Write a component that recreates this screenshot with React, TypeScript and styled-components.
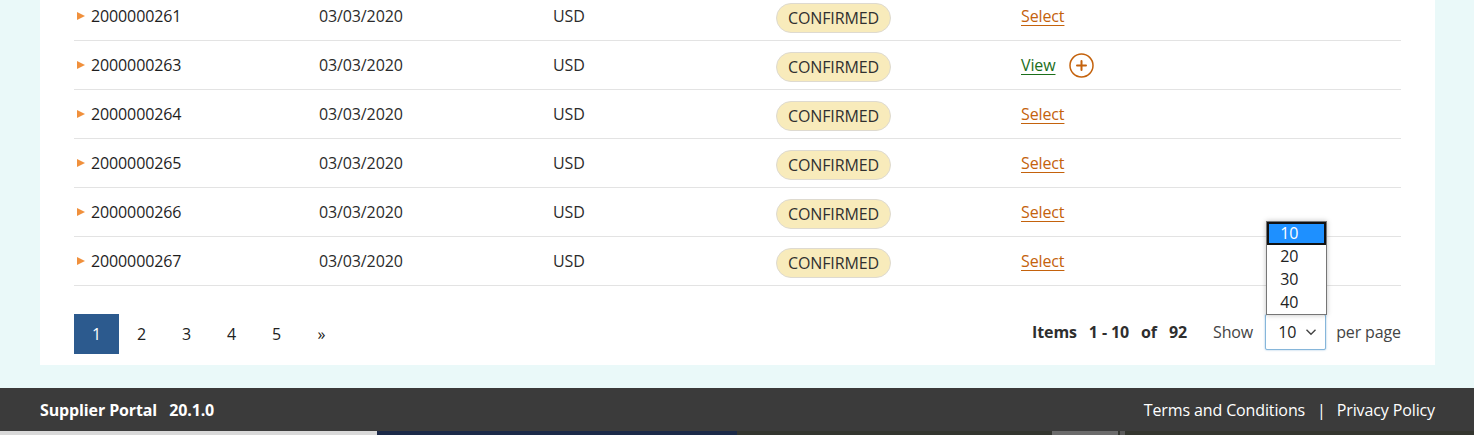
import React from "react";
import styled, { createGlobalStyle } from "styled-components";

const GlobalStyle = createGlobalStyle`
  html, body {
    margin: 0;
    padding: 0;
    background: #eaf9f9;
    font-family: "Open Sans", "Liberation Sans", sans-serif;
    letter-spacing: -0.12px;
    color: #222;
    overflow: hidden;
  }
`;

type Order = {
  id: string;
  date: string;
  currency: string;
  status: string;
  action: "select" | "view";
};

const orders: Order[] = [
  { id: "2000000261", date: "03/03/2020", currency: "USD", status: "CONFIRMED", action: "select" },
  { id: "2000000263", date: "03/03/2020", currency: "USD", status: "CONFIRMED", action: "view" },
  { id: "2000000264", date: "03/03/2020", currency: "USD", status: "CONFIRMED", action: "select" },
  { id: "2000000265", date: "03/03/2020", currency: "USD", status: "CONFIRMED", action: "select" },
  { id: "2000000266", date: "03/03/2020", currency: "USD", status: "CONFIRMED", action: "select" },
  { id: "2000000267", date: "03/03/2020", currency: "USD", status: "CONFIRMED", action: "select" },
];

const pages = ["1", "2", "3", "4", "5", "»"];
const sizes = ["10", "20", "30", "40"];

export default function App() {
  return (
    <>
      <GlobalStyle />
      <Page>
        <Panel>
          {orders.map((order) => (
            <Row key={order.id}>
              <IdCell>
                <Caret />
                {order.id}
              </IdCell>
              <Cell>{order.date}</Cell>
              <Cell>{order.currency}</Cell>
              <Cell>
                <StatusBadge>{order.status}</StatusBadge>
              </Cell>
              <Cell>
                {order.action === "select" ? (
                  <ActionLink href="#">Select</ActionLink>
                ) : (
                  <>
                    <ActionLink href="#" $green>
                      View
                    </ActionLink>
                    <PlusButton aria-label="Add">
                      <svg width="25" height="25" viewBox="0 0 25 25">
                        <circle cx="12.5" cy="12.5" r="11.5" fill="none" stroke="#c4620c" strokeWidth="1.5" />
                        <path d="M12.5 8v9M8 12.5h9" stroke="#c4620c" strokeWidth="2" strokeLinecap="round" />
                      </svg>
                    </PlusButton>
                  </>
                )}
              </Cell>
            </Row>
          ))}
          <Pager>
            <PageList>
              {pages.map((p) => (
                <PageItem key={p} $active={p === "1"}>
                  {p}
                </PageItem>
              ))}
            </PageList>
            <PagerInfo>
              <Summary>
                <span>Items</span>
                <span>1 - 10</span>
                <span>of</span>
                <span>92</span>
              </Summary>
              <Label>Show</Label>
              <SizeSelect>
                <SizeValue>10</SizeValue>
                <svg width="12" height="8" viewBox="0 0 12 8">
                  <path d="M1.5 1.8 6 6.2l4.5-4.4" fill="none" stroke="#444" strokeWidth="1.4" />
                </svg>
                <SizeMenu>
                  {sizes.map((s) => (
                    <SizeOption key={s} $selected={s === "10"}>
                      {s}
                    </SizeOption>
                  ))}
                </SizeMenu>
              </SizeSelect>
              <Label>per page</Label>
            </PagerInfo>
          </Pager>
        </Panel>
      </Page>
      <Footer>
        <Brand>
          Supplier Portal<Version>20.1.0</Version>
        </Brand>
        <FooterLinks>
          <FooterLink href="#">Terms and Conditions</FooterLink>
          <Divider>|</Divider>
          <FooterLink href="#">Privacy Policy</FooterLink>
        </FooterLinks>
      </Footer>
      <BelowStrip>
        <StripBlock $w="377px" $c="#d9d9d9" />
        <StripBlock $w="360px" $c="#1c2a48" />
        <StripBlock $w="315px" $c="#33352f" />
        <StripBlock $w="66px" $c="#6b6b6b" />
        <StripBlock $w="2px" $c="#33352f" />
        <StripBlock $w="5px" $c="#5a5a5a" />
        <StripBlock $w="auto" $c="#34362f" $grow />
      </BelowStrip>
    </>
  );
}

const Page = styled.main`
  padding: 0 39px 23px 40px;
`;

const Panel = styled.section`
  background: #fff;
  margin-top: -8px;
  padding: 0 34px 11px;
`;

const Row = styled.div`
  display: grid;
  grid-template-columns: 245px 234px 223px 245px 1fr;
  height: 48px;
  align-items: center;
  border-bottom: 1px solid #e3e3e3;
  font-size: 16px;
`;

const Cell = styled.div`
  display: flex;
  align-items: center;
  color: #2b2b2b;
`;

const IdCell = styled(Cell)`
  color: #1e1e1e;
`;

const Caret = styled.span`
  width: 0;
  height: 0;
  margin: 0 6px 0 3px;
  border-left: 8px solid #f0903c;
  border-top: 4.5px solid transparent;
  border-bottom: 4.5px solid transparent;
`;

const StatusBadge = styled.span`
  display: inline-flex;
  align-items: center;
  height: 28px;
  margin-top: 4px;
  padding: 0 11px;
  border: 1px solid #dedad0;
  border-radius: 15px;
  background: #f8ebbb;
  color: #303030;
  font-size: 16px;
`;

const ActionLink = styled.a<{ $green?: boolean }>`
  color: ${(p) => (p.$green ? "#1b6e1b" : "#c4620c")};
  text-decoration: underline;
  text-underline-offset: 3px;
  font-size: 16px;
`;

const PlusButton = styled.span`
  display: inline-flex;
  margin-left: 14px;
  margin-top: 1px;
`;

const Pager = styled.div`
  display: flex;
  justify-content: space-between;
  align-items: flex-start;
  padding-top: 28px;
`;

const PageList = styled.div`
  display: flex;
`;

const PageItem = styled.span<{ $active?: boolean }>`
  width: 45px;
  height: 40px;
  display: flex;
  align-items: center;
  justify-content: center;
  font-size: 16px;
  color: ${(p) => (p.$active ? "#fff" : "#222")};
  background: ${(p) => (p.$active ? "#2c5a8e" : "transparent")};
`;

const PagerInfo = styled.div`
  display: flex;
  align-items: center;
  font-size: 16px;
`;

const Summary = styled.div`
  display: flex;
  gap: 12px;
  font-weight: 700;
  color: #2e2e2e;
  margin-right: 26px;
`;

const Label = styled.span`
  color: #444;
`;

const SizeSelect = styled.div`
  position: relative;
  display: flex;
  align-items: center;
  box-sizing: border-box;
  width: 61px;
  height: 36px;
  margin: 0 10px 0 12px;
  padding-left: 12px;
  border: 1px solid #86b6da;
  border-radius: 2px;
  box-shadow: 0 0 2px rgba(70, 140, 200, 0.6);
  background: #fff;
`;

const SizeValue = styled.span`
  color: #222;
  margin-right: 9px;
`;

const SizeMenu = styled.ul`
  position: absolute;
  bottom: 100%;
  left: 0;
  width: 61px;
  box-sizing: border-box;
  margin: 0;
  padding: 0;
  list-style: none;
  background: #fff;
  border: 1px solid #767676;
  box-shadow: 0 0 5px rgba(0, 0, 0, 0.25);
`;

const SizeOption = styled.li<{ $selected?: boolean }>`
  box-sizing: border-box;
  height: 23px;
  line-height: ${(p) => (p.$selected ? "19px" : "23px")};
  padding-left: ${(p) => (p.$selected ? "11px" : "13px")};
  font-size: 16px;
  color: ${(p) => (p.$selected ? "#fff" : "#222")};
  background: ${(p) => (p.$selected ? "#1e90ff" : "#fff")};
  border: ${(p) => (p.$selected ? "2px solid #111" : "none")};
`;

const Footer = styled.footer`
  display: flex;
  justify-content: space-between;
  align-items: center;
  height: 43px;
  padding: 0 39px 0 40px;
  background: #3b3b3b;
  color: #fff;
  font-size: 16px;
`;

const Brand = styled.div`
  font-weight: 700;
`;

const Version = styled.span`
  margin-left: 12px;
`;

const FooterLinks = styled.div`
  display: flex;
  align-items: center;
`;

const FooterLink = styled.a`
  color: #fff;
  text-decoration: none;
`;

const Divider = styled.span`
  margin: 0 11px 0 12px;
`;

const BelowStrip = styled.div`
  display: flex;
  height: 4px;
`;

const StripBlock = styled.div<{ $w: string; $c: string; $grow?: boolean }>`
  width: ${(p) => p.$w};
  flex: ${(p) => (p.$grow ? "1" : "none")};
  background: ${(p) => p.$c};
`;
